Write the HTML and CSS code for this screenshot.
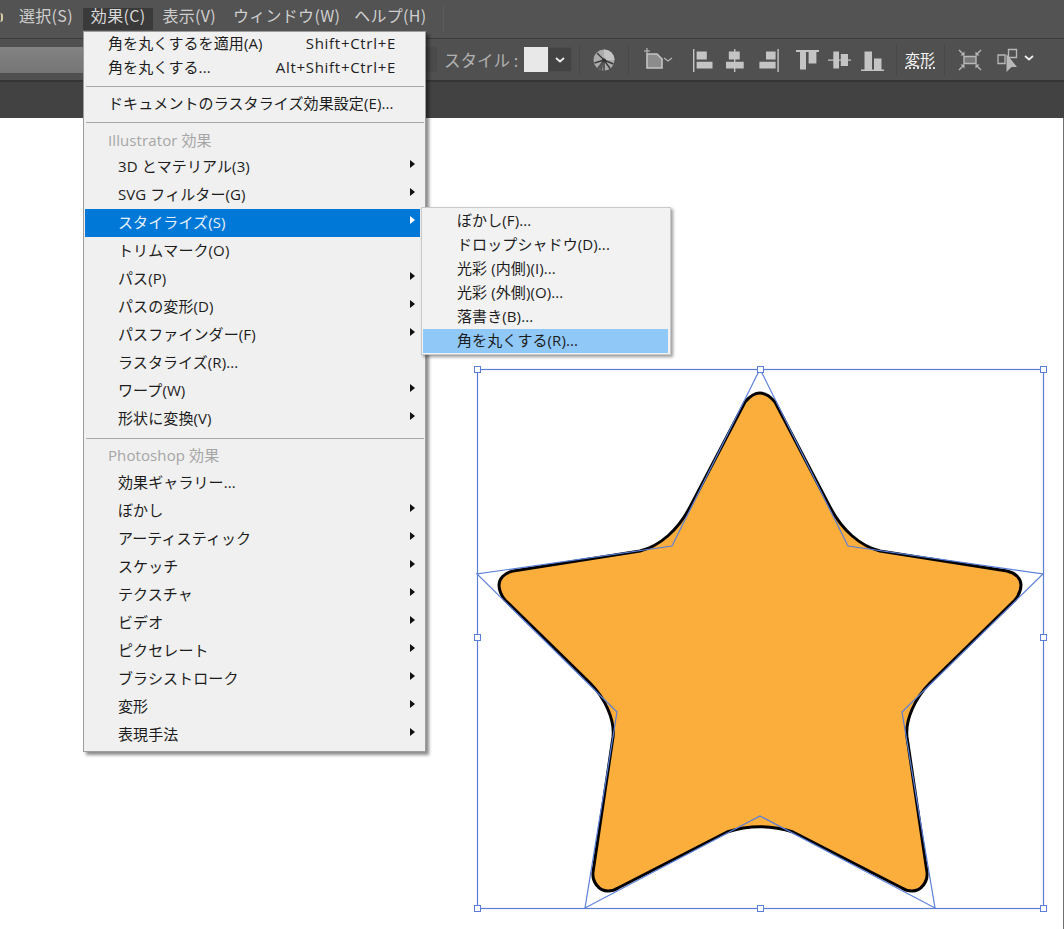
FILE: index.html
```html
<!DOCTYPE html>
<html lang="ja">
<head>
<meta charset="utf-8">
<title>Illustrator 効果</title>
<link rel="stylesheet" href="styles.css">
</head>
<body>
<div class="app">
  <header class="menubar">
    <span class="cut"></span>
    <span class="mb-item">選択(S)</span>
    <span class="mb-item active">効果(C)</span>
    <span class="mb-item">表示(V)</span>
    <span class="mb-item">ウィンドウ(W)</span>
    <span class="mb-item help">ヘルプ(H)</span>
    <span class="mb-sep"></span>
  </header>

  <div class="options">
    <div class="field"></div>
    <div class="field-end"></div>
    <span class="style-label">スタイル :</span>
    <div class="swatch"></div>
    <div class="swatch-drop">
      <svg class="chev" viewBox="0 0 10 6"><path d="M1 1l4 3.5L9 1" /></svg>
    </div>
    <span class="vsep sep-a"></span>
    <svg class="globe" viewBox="0 0 22 22">
      <circle cx="11" cy="11" r="10.5" fill="#ababab"/>
      <path d="M11 .5A10.5 10.5 0 0 1 21.5 11H11z" fill="#c4c4c4"/>
      <path d="M11 11L4 4M11 11L1.5 14M11 11L5 19.5M11 11L11 21.5M11 11L17 19.5M11 11L20.5 15" stroke="#3a3a3a" stroke-width="1.4"/>
      <path d="M11 11L4 19L9 21.5z" fill="#555"/>
      <circle cx="11" cy="11" r="1.8" fill="#333"/>
    </svg>
    <span class="vsep sep-b"></span>
    <svg class="shape" viewBox="0 0 30 24">
      <path d="M0 3h6M3 0v6" stroke="#c4c4c4" stroke-width="1"/>
      <path d="M3 6h10l5 5v9H3z" fill="#8c8c8c" stroke="#c4c4c4" stroke-width="1.6"/>
      <path d="M20 10l4 3 4-3" fill="none" stroke="#b4b4b4" stroke-width="1.2"/>
    </svg>
    <svg class="aligns" viewBox="692 48 193 26" fill="#c4c4c4">
      <path d="M693 50h1.4v23H693zM696.6 52.6h10.2v7.8h-10.2zM696.6 62.8h15.9v6.8h-15.9z"/>
      <path d="M734 50h1.4v23H734zM728.8 52.6h10.9v7.9h-10.9zM726 62.8h17.7v6.8H726z"/>
      <path d="M777.4 50h1.4v23h-1.4zM766 52.6h9.6v7.8H766zM759.4 62.8h16.2v6.8h-16.2z"/>
      <path d="M796 51h23v2h-23zM800 53h6v17.6h-6zM808.6 53h7.8v11.5h-7.8z"/>
      <path d="M828 60.4h23v1.4h-23zM833.3 52.6h5.7v17h-5.7zM840.8 55h7.2v12h-7.2z"/>
      <path d="M861 70.5h23V72h-23zM864.5 52.6h7.5v17.9h-7.5zM874 59.4h7.5v11.1H874z"/>
    </svg>
    <span class="vsep sep-c"></span>
    <span class="transform-label">変形</span>
    <span class="vsep sep-d"></span>
    <svg class="tf" viewBox="0 0 24 22">
      <path d="M6 7.5h12v7H6z" fill="#777" stroke="#b8b8b8" stroke-width="1.4"/>
      <path d="M1 1l5 5M23 1l-5 5M1 21l5-5M23 21l-5-5" stroke="#b8b8b8" stroke-width="1.4"/>
      <path d="M2.5 6.5h4v-4zM21.5 6.5h-4v-4zM2.5 15.500h4v4zM21.500 15.500h-4v4z" fill="#b8b8b8"/>
    </svg>
    <svg class="pick" viewBox="0 0 21 24">
      <path d="M11.500 1.500h8v8h-8zM1 7h7v8.500H1z" fill="none" stroke="#b8b8b8" stroke-width="1.300"/>
      <path d="M9.500 6L20 19h-5.500l-5 5z" fill="#b8b8b8"/>
    </svg>
    <svg class="chev chev-end" viewBox="0 0 10 6"><path d="M1 1l4 3.500L9 1" /></svg>
  </div>

  <div class="tabbar"></div>

  <main class="canvas">
    <svg class="art" viewBox="0 118 1064 811">
      <path class="star" d="M745 402C750 396 755 393 760 393C765 393 770 396 775 402L830 507C842 530 860 546 880 551L1007 571C1016 573 1021 579 1021 585C1021 590 1019 595 1015 600L930 683C915 698 905 720 907 737L927 872C928 882 921 891 912 891C908 891 905 890 902 888L793 832C772 825.300 748 825.300 727 832L618 888C615 890 612 891 608 891C599 891 592 882 593 872L613 737C615 720 605 698 590 683L505 600C501 595 499 590 499 585C499 579 504 573 513 571L640 551C660 546 678 530 690 507z"/>
      <path class="sel" d="M760 369L848 546L1043 574L902 712L935 908L760 816L585 908L617 712L477 574L672 546z"/>
      <rect class="sel" x="477.500" y="369.500" width="566" height="539"/>
      <g class="handles">
        <rect x="474.500" y="366.500" width="6" height="6"/>
        <rect x="757.500" y="366.500" width="6" height="6"/>
        <rect x="1040.500" y="366.500" width="6" height="6"/>
        <rect x="474.500" y="634.500" width="6" height="6"/>
        <rect x="1040.500" y="634.500" width="6" height="6"/>
        <rect x="474.500" y="905.500" width="6" height="6"/>
        <rect x="757.500" y="905.500" width="6" height="6"/>
        <rect x="1040.500" y="905.500" width="6" height="6"/>
      </g>
    </svg>
  </main>

  <nav class="menu">
    <div class="row short top"><span>角を丸くするを適用(A)</span><span class="key">Shift+Ctrl+E</span></div>
    <div class="row short top"><span>角を丸くする...</span><span class="key">Alt+Shift+Ctrl+E</span></div>
    <hr class="sep first">
    <div class="row short top"><span>ドキュメントのラスタライズ効果設定(E)...</span></div>
    <hr class="sep second">
    <div class="heading">Illustrator 効果</div>
    <div class="row sub">3D とマテリアル(3)</div>
    <div class="row sub">SVG フィルター(G)</div>
    <div class="row sub hot">スタイライズ(S)</div>
    <div class="row">トリムマーク(O)</div>
    <div class="row sub">パス(P)</div>
    <div class="row sub">パスの変形(D)</div>
    <div class="row sub">パスファインダー(F)</div>
    <div class="row">ラスタライズ(R)...</div>
    <div class="row sub">ワープ(W)</div>
    <div class="row sub">形状に変換(V)</div>
    <hr class="sep third">
    <div class="heading ps">Photoshop 効果</div>
    <div class="row">効果ギャラリー...</div>
    <div class="row sub">ぼかし</div>
    <div class="row sub">アーティスティック</div>
    <div class="row sub">スケッチ</div>
    <div class="row sub">テクスチャ</div>
    <div class="row sub">ビデオ</div>
    <div class="row sub">ピクセレート</div>
    <div class="row sub">ブラシストローク</div>
    <div class="row sub">変形</div>
    <div class="row sub">表現手法</div>
  </nav>

  <nav class="submenu">
    <div class="sm-row">ぼかし(F)...</div>
    <div class="sm-row">ドロップシャドウ(D)...</div>
    <div class="sm-row">光彩 (内側)(I)...</div>
    <div class="sm-row">光彩 (外側)(O)...</div>
    <div class="sm-row">落書き(B)...</div>
    <div class="sm-row current">角を丸くする(R)...</div>
  </nav>
</div>
</body>
</html>
```

FILE: styles.css
```css
* { box-sizing: border-box; }
html, body { margin: 0; padding: 0; overflow: hidden; background: #fff; }
body { font-family: "Noto Sans CJK JP", "Noto Sans", sans-serif; }
.app { position: relative; width: 1064px; height: 929px; overflow: hidden; display: flex; flex-direction: column; }

/* menu bar */
.menubar { height: 39px; background: #535353; border-bottom: 1px solid #3b3b3b; display: flex; align-items: flex-start; padding-top: 8px; color: #cfcfcf; font-size: 16px; letter-spacing: .3px; line-height: 14px; flex: none; }
.cut { width: 3px; height: 9px; margin: 5px 8px 0 0; border-right: 2px solid #d9cfa6; border-radius: 0 4px 4px 0; }
.mb-item { padding: 0 8px; margin-right: 1px; height: 22px; }
.mb-item.active { background: #3a3a3a; color: #d8d8d8; margin-left: 1px; }
.mb-item.help { margin-left: -3px; }
.mb-sep { width: 1px; height: 26px; background: #5c5c5c; margin: -2px 0 0 8px; }

/* options bar */
.options { height: 43px; background: #505050; border-bottom: 2px solid #343434; display: flex; align-items: center; color: #b4b4b4; flex: none; }
.field { width: 426px; height: 26px; background: linear-gradient(#828282, #757575); }
.field-end { width: 11px; height: 25px; background: #4a4a4a; border-radius: 0 2px 2px 0; }
.style-label { margin-left: 7px; width: 80px; font-size: 16.5px; white-space: nowrap; color: #b0b0b0; }
.swatch { width: 24px; height: 25px; background: #e8e8e8; }
.swatch-drop { width: 24px; height: 25px; background: #434343; border: 1px solid #4c4c4c; display: flex; align-items: center; justify-content: center; }
.chev { width: 10px; height: 6px; fill: none; stroke: #eee; stroke-width: 1.700; display: block; }
.vsep { width: 1px; height: 32px; background: #484848; flex: none; }
.sep-a { margin-left: 7px; }
.globe { width: 22px; height: 22px; margin-left: 13px; }
.sep-b { margin-left: 13px; }
.shape { width: 30px; height: 24px; margin-left: 15px; }
.aligns { width: 193px; height: 26px; margin-left: 18px; }
.sep-c { margin-left: 11px; }
.transform-label { margin-left: 8px; width: 30px; font-size: 15px; line-height: 16px; color: #f4f4f4; border-bottom: 2px dotted #dcdcdc; white-space: nowrap; }
.sep-d { margin-left: 9px; }
.tf { width: 24px; height: 22px; margin-left: 13px; }
.pick { width: 21px; height: 24px; margin-left: 15px; }
.chev-end { margin-left: 6px; margin-top: -4px; }

.tabbar { height: 36px; background: #424242; flex: none; }

/* canvas */
.canvas { flex: 1; background: #fff; border-right: 1px solid #6e6e6e; }
.art { display: block; width: 1064px; height: 811px; }
.star { fill: #fbae3c; stroke: #000; stroke-width: 3; stroke-linejoin: round; }
.sel { fill: none; stroke: #5b7fd8; stroke-width: 1.200; }
.handles rect { fill: #fff; stroke: #5b7fd8; stroke-width: 1; }

/* effect menu */
.menu { position: absolute; left: 83px; top: 31px; width: 343px; height: 721px; background: #f0f0f0; border: 1px solid #9d9d9d; padding: 0 5px 0 1px; box-shadow: 3px 3px 3px rgba(0, 0, 0, .45); color: #1c1c1c; font-family: "Open Sans", "Noto Sans CJK JP", sans-serif; font-size: 15px; letter-spacing: .1px; }
.row { position: relative; height: 28px; line-height: 27px; padding-left: 33px; white-space: nowrap; }
.row.short { height: 24px; line-height: 23px; }
.row.top { padding-left: 23px; padding-right: 28px; display: flex; justify-content: space-between; margin-right: -4px; }
.key { color: #222; letter-spacing: .7px; }
.row.hot { background: #0078d7; color: #e8f2fb; }
.sub::after { content: ""; position: absolute; left: 325px; top: 7px; border-left: 5px solid #111; border-top: 4.500px solid transparent; border-bottom: 4.500px solid transparent; }
.hot::after { border-left-color: #fff; }
.sep { height: 1px; border: 0; margin: 5px -4px 0 1px; background: #a8a8a8; }
.sep.first { margin-top: 6px; margin-bottom: 5px; }
.sep.second { margin-top: 6px; }
.heading { height: 30px; padding: 5px 0 0 23px; line-height: 24px; color: #a6a6a6; white-space: nowrap; }
.heading.ps { padding-top: 4px; }

/* sub menu */
.submenu { position: absolute; left: 421px; top: 207px; width: 250px; height: 148px; background: #f2f2f2; border: 1px solid #c9c9c9; padding: 1px 2px 1px 1px; box-shadow: 2px 2px 3px rgba(0, 0, 0, .4); color: #1c1c1c; font-family: "Open Sans", "Noto Sans CJK JP", sans-serif; font-size: 15px; letter-spacing: .1px; }
.sm-row { height: 24px; line-height: 23px; padding-left: 34px; white-space: nowrap; }
.sm-row.current { background: #90c8f8; }
```
